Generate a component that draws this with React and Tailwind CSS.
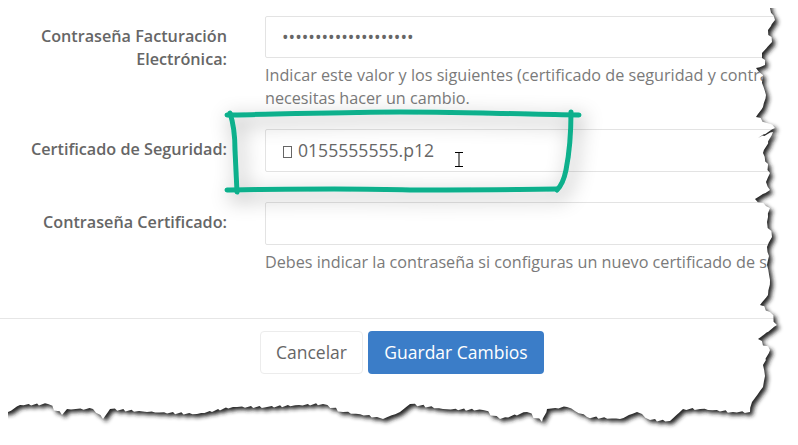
import React from 'react';

const font = { fontFamily: '"Open Sans", "Liberation Sans", sans-serif' };

// torn paper outline, clockwise from the top right corner
const tornPoints = [[-30,-30],[766,-30],[770,8],[775,20],[768,30],[772,42],[762,53],[765,65],[756,68],[763,75],[762,83],[766,95],[763,107],[756,117],[767,123],[775,128],[758,138],[773,132],[763,153],[770,173],[766,182],[770,190],[755,199],[770,208],[768,217],[767,222],[772,237],[767,247],[769,256],[767,265],[770,280],[768,295],[760,305],[770,312],[777,325],[758,339],[770,350],[763,365],[765,376],[763,387],[752,402],[750,412],[733,412],[700,409],[683,409],[670,421],[650,420],[637,412],[620,419],[587,417],[567,407],[547,409],[542,422],[527,412],[500,419],[483,410],[443,409],[410,404],[400,412],[383,419],[377,417],[343,412],[323,404],[267,407],[233,407],[197,414],[147,412],[110,409],[103,419],[93,409],[67,409],[62,415],[48,404],[20,405],[8,412],[-30,412]];

// small fixed jitter so the long straight bits look ripped
const roughen = (pts) => {
    let out = `M${pts[0][0]} ${pts[0][1]}`;
    pts.slice(1).forEach(([x, y], i) => {
        const [px, py] = pts[i];
        const steps = i === 0 || i === pts.length - 2 ? 1 : Math.max(1, Math.floor(Math.hypot(x - px, y - py) / 4));
        for (let s = 1; s <= steps; s++) {
            const t = s / steps;
            const j = s === steps ? 0 : Math.sin((i + 1) * 12.9 + s * 78.2) * 1.1;
            out += ` L${(px + (x - px) * t + j).toFixed(1)} ${(py + (y - py) * t - j).toFixed(1)}`;
        }
    });
    return `${out} Z`;
};

const tornEdge = roughen(tornPoints);
const outer = 'M-40 -40 H840 V480 H-40 Z';

function TornPaper() {
    return (
        <svg className="absolute inset-0 pointer-events-none" width="798" height="445" viewBox="0 0 798 445">
            <defs>
                <filter id="tear" x="-5%" y="-5%" width="110%" height="110%">
                    <feGaussianBlur stdDeviation="2" />
                </filter>
                <clipPath id="outside">
                    <path clipRule="evenodd" d={`${outer} ${tornEdge}`} />
                </clipPath>
                <clipPath id="fade">
                    <rect x="8" y="8" width="790" height="437" />
                </clipPath>
            </defs>
            <path fillRule="evenodd" fill="#ffffff" d={`${outer} ${tornEdge}`} />
            <g clipPath="url(#fade)">
                <g clipPath="url(#outside)">
                    <path d={tornEdge} fill="#222222" filter="url(#tear)" transform="translate(3 3)" />
                </g>
            </g>
        </svg>
    );
}

function Highlight() {
    return (
        <svg className="absolute inset-0 pointer-events-none" width="798" height="445" viewBox="0 0 798 445">
            <defs>
                <filter id="glow" x="-20%" y="-40%" width="140%" height="180%">
                    <feDropShadow dx="4" dy="6" stdDeviation="10" floodColor="#000000" floodOpacity="0.4" />
                </filter>
            </defs>
            <g filter="url(#glow)" fill="none" stroke="#0bb08c" strokeWidth="5" strokeLinecap="round" strokeLinejoin="round">
                <path d="M227 115 C290 114 350 112 400 112 C460 112 520 114 579 115" />
                <path d="M571 112 C571 130 570 150 566 170 C564 180 561 186 557 190" />
                <path d="M557 189 C500 190 450 190 410 190 C350 188 290 189 227 190" />
                <path d="M230 113 C234 125 235 135 235 150 L237 192" />
            </g>
            <path d="M455 152.5 H463 M459 152.5 V166.5 M455 166.5 H463" stroke="#000000" strokeWidth="1" fill="none" />
        </svg>
    );
}

function Row({ label, help, top, children }) {
    return (
        <div className={`grid grid-cols-[227px_1fr] gap-x-[38px] ${top}`}>
            <label className="text-right font-semibold text-[#666666] text-[16.2px] leading-[23px] pt-[9px]">{label}</label>
            <div className="w-[560px]">
                {children}
                {help && <p className="text-[16.2px] leading-[23px] text-[#7a7a7a] mt-[6px] whitespace-nowrap">{help}</p>}
            </div>
        </div>
    );
}

export default function App() {
    return (
        <div style={font} className="relative w-[798px] h-[445px] overflow-hidden bg-white">
            <div className="pt-[16px]">
                <Row label={<>Contraseña Facturación<br />Electrónica:</>} help={<>Indicar este valor y los siguientes (certificado de seguridad y contraseña) solo si<br />necesitas hacer un cambio.</>}>
                    <div className="h-[42px] border border-[#e3e3e3] rounded-[2px] pl-[16px] flex items-center text-[17.5px] text-[#666666]">••••••••••••••••••••</div>
                </Row>
                <Row top="mt-[19px]" label="Certificado de Seguridad:">
                    <div className="h-[43px] border border-[#e3e3e3] rounded-[2px] pl-[17px] flex items-center gap-[6px] text-[17.6px] text-[#666666]">
                        <span className="w-[9px] h-[12px] border border-[#666666] mt-[2px]"></span>
                        <span>0155555555.p12</span>
                    </div>
                </Row>
                <Row top="mt-[30px]" label="Contraseña Certificado:" help="Debes indicar la contraseña si configuras un nuevo certificado de seguridad">
                    <div className="h-[43px] border border-[#e3e3e3] rounded-[2px]"></div>
                </Row>
                <div className="mt-[44px] border-t border-[#e6e6e6] pt-[12px] pl-[6px] flex justify-center gap-[5px]">
                    <button className="h-[43px] w-[103px] border border-[#ececec] rounded-[4px] bg-white text-[17.5px] text-[#666666]">Cancelar</button>
                    <button className="h-[43px] w-[176px] rounded-[4px] bg-[#3b7dc8] text-[17.5px] font-medium text-white">Guardar Cambios</button>
                </div>
            </div>
            <TornPaper />
            <Highlight />
        </div>
    );
}
